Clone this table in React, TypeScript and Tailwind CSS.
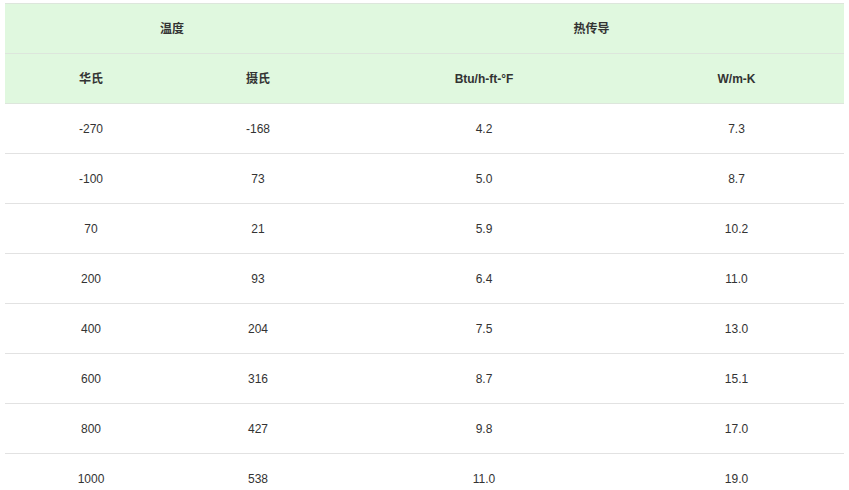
import React from "react";

const rows = [
  ["-270", "-168", "4.2", "7.3"],
  ["-100", "73", "5.0", "8.7"],
  ["70", "21", "5.9", "10.2"],
  ["200", "93", "6.4", "11.0"],
  ["400", "204", "7.5", "13.0"],
  ["600", "316", "8.7", "15.1"],
  ["800", "427", "9.8", "17.0"],
  ["1000", "538", "11.0", "19.0"],
];

const App: React.FC = () => {
  return (
    <div
      className="bg-white pl-[5px] pt-[3px] h-[490px] overflow-hidden text-[12px] text-[#333]"
      style={{ fontFamily: '"Liberation Sans", Arial, "Noto Sans CJK SC", sans-serif' }}
    >
      <table className="w-[839px] border-collapse table-fixed">
        <colgroup>
          <col className="w-[172px]" />
          <col className="w-[162px]" />
          <col className="w-[290px]" />
          <col className="w-[215px]" />
        </colgroup>
        <thead className="bg-[#e0f8df] font-bold">
          <tr className="h-[50px] border-t border-b border-[#dde6dc]">
            <th colSpan={2} className="text-center font-bold">温度</th>
            <th colSpan={2} className="text-center font-bold">热传导</th>
          </tr>
          <tr className="h-[50px] border-b border-[#dde6dc]">
            <th className="text-center font-bold">华氏</th>
            <th className="text-center font-bold">摄氏</th>
            <th className="text-center font-bold">Btu/h-ft-°F</th>
            <th className="text-center font-bold">W/m-K</th>
          </tr>
        </thead>
        <tbody>
          {rows.map((r, i) => (
            <tr key={i} className="h-[50px] border-b border-[#e2e2e2]">
              {r.map((c, j) => (
                <td key={j} className="text-center">{c}</td>
              ))}
            </tr>
          ))}
        </tbody>
      </table>
    </div>
  );
};

export default App;
